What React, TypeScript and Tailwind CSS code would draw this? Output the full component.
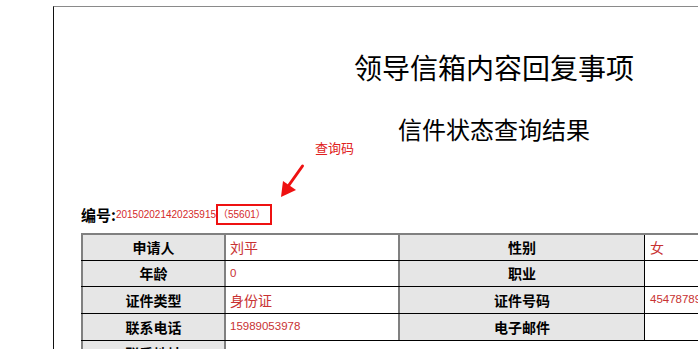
import React from "react";

const cjk = { fontFamily: '"Noto Sans CJK SC", "Noto Sans", sans-serif' };
const num = { fontFamily: '"Liberation Sans", "Noto Sans CJK SC", sans-serif' };

type Row = { l1: string; v1: string; v1num?: boolean; l2?: string; v2?: string; v2num?: boolean; h: string };

const rows: Row[] = [
  { l1: "申请人", v1: "刘平", l2: "性别", v2: "女", h: "h-[26px]" },
  { l1: "年龄", v1: "0", v1num: true, l2: "职业", v2: "", h: "h-[26px]" },
  { l1: "证件类型", v1: "身份证", l2: "证件号码", v2: "454787898745632111", v2num: true, h: "h-[27px]" },
  { l1: "联系电话", v1: "15989053978", v1num: true, l2: "电子邮件", v2: "", h: "h-[27px]" },
];

export default function App() {
  return (
    <div className="relative w-[698px] h-[349px] overflow-hidden bg-white" style={cjk}>
      <div className="ml-[53px] mt-[6px] w-[881px] h-[400px] border-t border-l border-t-[#8a8a8a] border-l-[#111]">
        <div className="mt-[46px] text-center text-[28px] leading-[28px] text-black">领导信箱内容回复事项</div>
        <div className="mt-[36px] text-center text-[24px] leading-[24px] text-black">信件状态查询结果</div>

        <div className="ml-[27px] mt-[63px] flex h-[21px] items-center">
          <span className="text-[15px] font-bold leading-none text-black">编号:</span>
          <span className="text-[10px] leading-none text-[#d42a2a]" style={num}>201502021420235915</span>
          <span
            className="flex h-[21px] w-[56px] items-center border-2 border-[#ee1111] text-[10px] leading-none text-[#d42a2a]"
            style={num}
          >
            （55601）
          </span>
        </div>

        <div className="ml-[27px] mt-[8px] border-t-2 border-[#808080]">
          {rows.map((r, i) => (
            <div key={i} className={`flex border-b border-black ${r.h}`}>
              <div className="flex w-[143px] items-center justify-center border-l-2 border-[#808080] bg-[#e6e6e6] text-[14px] font-bold text-black">
                {r.l1}
              </div>
              <div
                className={`flex w-[174px] items-center border-l-2 border-[#808080] pl-[4px] text-[#c83232] ${r.v1num ? "text-[11.5px]" : "text-[14px]"}`}
                style={r.v1num ? num : cjk}
              >
                {r.v1}
              </div>
              <div className="flex w-[246px] items-center justify-center border-l-2 border-[#808080] bg-[#e6e6e6] text-[14px] font-bold text-black">
                {r.l2}
              </div>
              <div
                className={`flex flex-1 items-center border-l border-black pl-[5px] text-[#c83232] ${r.v2num ? "text-[11.5px]" : "text-[14px]"}`}
                style={r.v2num ? num : cjk}
              >
                {r.v2}
              </div>
            </div>
          ))}
          <div className="flex h-[26px] border-b border-black">
            <div className="flex w-[143px] items-center justify-center border-l-2 border-[#808080] bg-[#e6e6e6] text-[14px] font-bold text-black">
              联系地址
            </div>
            <div className="flex flex-1 items-center border-l-2 border-[#808080] pl-[4px] text-[14px] text-[#c83232]"></div>
          </div>
        </div>
      </div>

      <div className="absolute left-[315px] top-[140px] text-[13px] leading-[16px] text-[#e02020]">查询码</div>
      <svg className="absolute left-0 top-0" width="698" height="349" viewBox="0 0 698 349" style={{ pointerEvents: "none" }}>
        <line x1="302.5" y1="166" x2="289" y2="185" stroke="#ee1111" strokeWidth="3" strokeLinecap="round" />
        <polygon points="281,197 283,181 296,190" fill="#ee1111" />
      </svg>
    </div>
  );
}
